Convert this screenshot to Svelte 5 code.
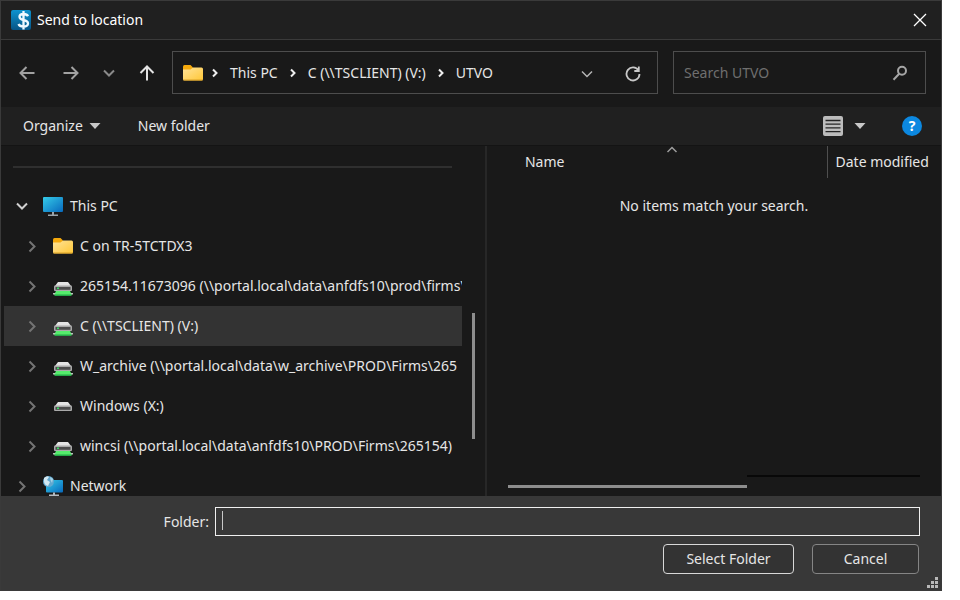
<script>
  const crumbs = ['This PC', 'C (\\\\TSCLIENT) (V:)', 'UTVO'];

  const tree = [
    { label: 'This PC', icon: 'pc', level: 0, open: true },
    { label: 'C on TR-5TCTDX3', icon: 'folder', level: 1 },
    { label: '265154.11673096 (\\\\portal.local\\data\\anfdfs10\\prod\\firms\\', icon: 'netdrive', level: 1 },
    { label: 'C (\\\\TSCLIENT) (V:)', icon: 'netdrive', level: 1, selected: true },
    { label: 'W_archive (\\\\portal.local\\data\\w_archive\\PROD\\Firms\\265', icon: 'netdrive', level: 1 },
    { label: 'Windows (X:)', icon: 'drive', level: 1 },
    { label: 'wincsi (\\\\portal.local\\data\\anfdfs10\\PROD\\Firms\\265154)', icon: 'netdrive', level: 1 },
    { label: 'Network', icon: 'network', level: 0 }
  ];

  let search = $state('');
  let folder = $state('');
</script>

{#snippet folderIcon()}
  <svg width="22" height="20" viewBox="0 0 22 20">
    <path d="M1 3.500Q1 2 2.500 2H8.500L11 4.500V8H1Z" fill="#f5a90c" />
    <path d="M1 6.500H8.500L11 4.500H19.500Q21 4.500 21 6V16Q21 17.500 19.500 17.500H2.500Q1 17.500 1 16Z" fill="url(#folderFill)" />
    <path d="M1.500 17H20.500" stroke="#d9a027" stroke-width="1" />
  </svg>
{/snippet}

{#snippet chevron(open)}
  <svg width="14" height="14" viewBox="0 0 14 14" fill="none" stroke-width="2">
    {#if open}
      <path d="M2 4.500L7 9.500L12 4.500" stroke="#d0d0d0" />
    {:else}
      <path d="M4.500 2.500L9.500 7.500L4.500 12.500" stroke="#747474" />
    {/if}
  </svg>
{/snippet}

{#snippet itemIcon(kind)}
  {#if kind === 'folder'}
    {@render folderIcon()}
  {:else if kind === 'pc'}
    <svg width="22" height="20" viewBox="0 0 22 20">
      <rect x="1" y="1" width="20" height="15" rx="1" fill="url(#screenFill)" />
      <path d="M10 16H12V18.500H16V20H6V18.500H10Z" fill="#9aa3aa" />
    </svg>
  {:else if kind === 'network'}
    <svg width="22" height="22" viewBox="0 0 22 22">
      <rect x="4" y="5" width="17" height="12.500" rx="1" fill="url(#screenFill)" />
      <path d="M11 17.500H13V19.500H17V21H7V19.500H11Z" fill="#b4bac0" />
      <circle cx="6.500" cy="6.500" r="5.500" fill="#62a8cf" />
      <path d="M2 3Q5 0 7 2L5 5L8 7L6 11Q2 10 2 6Z" fill="#d3e9f2" />
      <path d="M8 2L11 4L10 8L8.500 5Z" fill="#a8d2e6" />
    </svg>
  {:else}
    <svg width="22" height="20" viewBox="0 0 22 20">
      <path d="M6 6H16L19 10H3Z" fill="#e4e4e4" />
      <rect x="2" y="9.500" width="18" height="5.500" rx="1" fill="#a9a9a9" />
      <rect x="3.500" y="11" width="15" height="2.800" fill="#4c4c4c" />
      <rect x="5" y="11.500" width="2" height="1.500" fill="#39dd62" />
      {#if kind === 'netdrive'}
        <path d="M4 15H18L20 19H2Z" fill="#55ec6c" />
        <path d="M1 17H3.500L3 18.500H1ZM18.500 17H21V18.500H19Z" fill="#b8c4ba" />
        <path d="M2.500 18.500H19.500V20H2.500Z" fill="#25a947" />
      {/if}
    </svg>
  {/if}
{/snippet}

<svg class="defs" width="0" height="0" aria-hidden="true">
  <defs>
    <linearGradient id="folderFill" x1="0" y1="0" x2="1" y2="1">
      <stop offset="0" stop-color="#ffe39a" />
      <stop offset="1" stop-color="#ffc736" />
    </linearGradient>
    <linearGradient id="screenFill" x1="0" y1="0" x2="1" y2="1">
      <stop offset="0" stop-color="#35cbe8" />
      <stop offset="1" stop-color="#0869bd" />
    </linearGradient>
    <linearGradient id="appFill" x1="0" y1="0" x2="0" y2="1">
      <stop offset="0" stop-color="#0d93cf" />
      <stop offset="1" stop-color="#075485" />
    </linearGradient>
  </defs>
</svg>

<main class="dialog">
  <header class="titlebar">
    <svg width="20" height="20" viewBox="0 0 20 20">
      <rect width="20" height="20" rx="2" fill="url(#appFill)" />
      <path d="M12.500 1V19.500M17 6.200Q16 4 12.500 4Q8.500 4 8.500 6.800Q8.500 9.300 12.500 10Q17 10.800 17 13.500Q17 16.500 12.500 16.500Q8.500 16.500 7.500 14" fill="none" stroke="#eef8ff" stroke-width="2.300" />
    </svg>
    <h1>Send to location</h1>
    <button class="icon close" aria-label="Close">
      <svg width="14" height="14" viewBox="0 0 14 14" fill="none" stroke="#fff" stroke-width="1.300"><path d="M1 1L13 13M13 1L1 13" /></svg>
    </button>
  </header>

  <nav class="nav">
    <div class="history">
      <button class="icon" aria-label="Back">
        <svg width="18" height="18" viewBox="0 0 18 18" fill="none" stroke="#a2a2a2" stroke-width="2"><path d="M16.500 9H2.500M8.500 3L2.500 9L8.500 15" /></svg>
      </button>
      <button class="icon" aria-label="Forward">
        <svg width="18" height="18" viewBox="0 0 18 18" fill="none" stroke="#a2a2a2" stroke-width="2"><path d="M1.500 9H15.500M9.500 3L15.500 9L9.500 15" /></svg>
      </button>
      <button class="icon small" aria-label="Recent locations">
        <svg width="14" height="14" viewBox="0 0 14 14" fill="none" stroke="#8a8a8a" stroke-width="2"><path d="M2 4.500L7 9.500L12 4.500" /></svg>
      </button>
      <button class="icon" aria-label="Up">
        <svg width="18" height="18" viewBox="0 0 18 18" fill="none" stroke="#e4e4e4" stroke-width="2"><path d="M9 16.500V2.500M2.500 9L9 2.500L15.500 9" /></svg>
      </button>
    </div>
    <div class="address">
      {@render folderIcon()}
      {#each crumbs as crumb}
        <svg class="sep" width="8" height="12" viewBox="0 0 8 12" fill="none" stroke="#eee" stroke-width="2"><path d="M2 2.500L5.500 6L2 9.500" /></svg>
        <button class="crumb">{crumb}</button>
      {/each}
      <span class="grow"></span>
      <button class="icon" aria-label="Previous locations">
        <svg width="14" height="14" viewBox="0 0 14 14" fill="none" stroke="#b5b5b5" stroke-width="1.500"><path d="M2 5.500L7 10.500L12 5.500" /></svg>
      </button>
      <button class="icon refresh" aria-label="Refresh">
        <svg width="18" height="18" viewBox="0 0 18 18" fill="none" stroke="#c8c8c8" stroke-width="1.800"><path d="M14.500 6.500A6.500 6.500 0 1 0 15.500 10M14.800 2.500V7H10.300" /></svg>
      </button>
    </div>
    <label class="search">
      <input type="text" placeholder="Search UTVO" aria-label="Search UTVO" bind:value={search} />
      <svg width="16" height="16" viewBox="0 0 16 16" fill="none" stroke="#a6a6a6" stroke-width="2"><circle cx="10" cy="5.800" r="4" /><path d="M7.200 8.800L1.500 14.800" /></svg>
    </label>
  </nav>

  <div class="toolbar">
    <button>Organize <svg width="12" height="6" viewBox="0 0 12 6"><path d="M0.500 0H11.500L6 6Z" fill="#c8c8c8" /></svg></button>
    <button>New folder</button>
    <span class="grow"></span>
    <button class="view" aria-label="Change your view">
      <svg width="22" height="22" viewBox="0 0 22 22"><rect x="1" y="1" width="20" height="20" rx="2" fill="#bcbcbc" /><path d="M3.500 5.500H18.500M3.500 9.200H18.500M3.500 12.900H18.500M3.500 16.600H18.500" stroke="#242424" stroke-width="1.300" /></svg>
      <svg width="12" height="6" viewBox="0 0 12 6"><path d="M0.500 0H11.500L6 6Z" fill="#c8c8c8" /></svg>
    </button>
    <button class="help" aria-label="Help">?</button>
  </div>

  <div class="body">
    <aside>
      <div class="tree">
        <hr />
        <ul>
          {#each tree as item}
            <li class:child={item.level === 1} class:selected={item.selected}>
              <button class="icon toggle" aria-label={item.open ? 'Collapse' : 'Expand'}>{@render chevron(item.open)}</button>
              <button class="node">
                {@render itemIcon(item.icon)}
                <span>{item.label}</span>
              </button>
            </li>
          {/each}
        </ul>
      </div>
      <div class="vscroll"><div></div></div>
    </aside>
    <section class="files">
      <table>
        <thead>
          <tr>
            <th class="name">
              <svg width="12" height="7" viewBox="0 0 12 7" fill="none" stroke="#9c9c9c" stroke-width="1.500"><path d="M1.500 6L6 1.500L10.500 6" /></svg>
              Name
            </th>
            <th class="date">Date modified</th>
          </tr>
        </thead>
        <tbody>
          <tr><td colspan="2">No items match your search.</td></tr>
        </tbody>
      </table>
      <div class="hscroll"><div class="thumb"></div><div class="rest"></div></div>
    </section>
  </div>

  <footer>
    <div class="field">
      <label for="folder">Folder:</label>
      <div class="entry">
        <input id="folder" type="text" bind:value={folder} />
        <i class="caret"></i>
      </div>
    </div>
    <div class="actions">
      <button class="primary">Select Folder</button>
      <button>Cancel</button>
    </div>
    <svg class="grip" width="12" height="12" viewBox="0 0 12 12" fill="#b8b8b8"><path d="M8 0H11V3H8ZM8 4H11V7H8ZM4 4H7V7H4ZM8 8H11V11H8ZM4 8H7V11H4ZM0 8H3V11H0Z" /></svg>
  </footer>
</main>

<style>
  :global(body) {
    margin: 0;
    background: #fff;
  }
  .defs {
    position: absolute;
  }
  .dialog,
  .dialog * {
    box-sizing: border-box;
  }
  .dialog {
    display: flex;
    flex-direction: column;
    height: calc(100vh - 9px);
    margin-right: 18px;
    border: 1px solid #3a3a3a;
    background: #191919;
    color: #e6e6e6;
    font: 14px/20px "Noto Sans", "Open Sans", sans-serif;
    overflow: hidden;
  }
  svg {
    flex: none;
    display: block;
  }
  button,
  input {
    margin: 0;
    padding: 0;
    border: 0;
    background: none;
    color: inherit;
    font: inherit;
    outline: none;
  }
  .icon {
    display: flex;
    flex: none;
    align-items: center;
    justify-content: center;
  }
  .grow {
    flex: 1;
  }
  .titlebar {
    display: flex;
    flex: none;
    align-items: center;
    gap: 6px;
    height: 39px;
    padding: 0 14px 0 10px;
    border-bottom: 1px solid #3a3a3a;
    background: #202020;
    color: #fff;
  }
  h1 {
    flex: 1;
    margin: 0;
    font-size: 14px;
    font-weight: 400;
  }
  .nav {
    display: flex;
    flex: none;
    align-items: center;
    height: 67px;
    padding: 0 15px 2px 17px;
  }
  .history {
    display: flex;
    flex: none;
    align-items: center;
    gap: 22px;
    width: 154px;
  }
  .history .icon {
    width: 18px;
    height: 32px;
  }
  .history .icon + .icon {
    margin-left: 4px;
  }
  .history .small + .icon,
  .history .icon + .small {
    width: 18px;
    margin-left: -2px;
  }
  .address,
  .search {
    display: flex;
    align-items: center;
    height: 43px;
    border: 1px solid #4d4d4d;
  }
  .address {
    flex: 1;
    min-width: 0;
    padding: 0 15px 0 9px;
  }
  .sep {
    margin: 0 11px 0 7px;
  }
  .crumb {
    white-space: nowrap;
  }
  .crumb + .sep {
    margin-left: 11px;
  }
  .refresh {
    margin-left: 30px;
  }
  .search {
    flex: 0 1 253px;
    min-width: 0;
    margin-left: 15px;
    padding: 0 17px 0 10px;
  }
  .search input {
    flex: 1;
    min-width: 0;
  }
  .search input::placeholder {
    color: #6f6f6f;
    opacity: 1;
  }
  .toolbar {
    display: flex;
    flex: none;
    align-items: center;
    height: 39px;
    padding: 0 19px 0 22px;
    background: #202020;
    border-bottom: 1px solid #141414;
  }
  .toolbar button {
    display: flex;
    align-items: center;
    gap: 6px;
    margin-right: 37px;
  }
  .toolbar .view {
    gap: 10px;
    margin-right: 36px;
  }
  .toolbar .help {
    justify-content: center;
    width: 20px;
    height: 20px;
    margin: 0;
    border-radius: 50%;
    background: #0c88e0;
    color: #fff;
    font-weight: 700;
  }
  .body {
    display: flex;
    flex: 1;
    min-height: 0;
  }
  aside {
    display: flex;
    flex: 485;
    min-width: 0;
    border-right: 2px solid #272727;
  }
  .tree {
    flex: 1;
    min-width: 0;
    padding-left: 3px;
    overflow: hidden;
  }
  hr {
    height: 2px;
    margin: 20px 10px 18px 9px;
    border: 0;
    background: #2f2f2f;
  }
  ul {
    margin: 0;
    padding: 0;
    list-style: none;
  }
  li {
    display: flex;
    align-items: center;
    height: 40px;
    padding-left: 11px;
  }
  .child {
    padding-left: 21px;
  }
  .selected {
    background: #333;
  }
  .toggle {
    width: 14px;
    height: 20px;
  }
  .node {
    display: flex;
    flex: 1;
    align-items: center;
    gap: 6px;
    min-width: 0;
    margin-left: 13px;
    overflow: hidden;
    white-space: nowrap;
  }
  .vscroll {
    width: 23px;
    padding: 167px 0 0 10px;
  }
  .vscroll div {
    width: 3px;
    height: 126px;
    background: #8d8d8d;
  }
  .files {
    display: flex;
    flex: 455;
    flex-direction: column;
    justify-content: space-between;
    min-width: 0;
  }
  table {
    width: 100%;
    border-collapse: collapse;
    table-layout: fixed;
  }
  th {
    position: relative;
    height: 32px;
    padding: 0;
    font-weight: 400;
    text-align: left;
    white-space: nowrap;
  }
  .name {
    padding-left: 38px;
  }
  .name svg {
    position: absolute;
    top: 0;
    left: 179px;
  }
  .date {
    width: 114px;
    padding-left: 8px;
    border-left: 1px solid #4f4f4f;
  }
  td {
    height: 56px;
    padding: 0;
    text-align: center;
  }
  .hscroll {
    display: flex;
    align-items: flex-end;
    height: 13px;
    margin: 0 21px 8px 21px;
  }
  .thumb {
    flex: 238;
    height: 3px;
    background: #8d8d8d;
  }
  .rest {
    flex: 173;
    align-self: flex-start;
    height: 13px;
    border-top: 2px solid #080808;
  }
  footer {
    position: relative;
    flex: none;
    height: 94px;
    padding: 11px 21px 0 10px;
    background: #383838;
  }
  .field {
    display: flex;
    align-items: center;
    gap: 6px;
  }
  .field label {
    width: 198px;
    text-align: right;
  }
  .entry {
    position: relative;
    display: flex;
    flex: 1;
  }
  .entry input {
    width: 100%;
    height: 29px;
    padding: 0 8px;
    border: 1px solid #f0f0f0;
  }
  .caret {
    position: absolute;
    top: 4px;
    left: 7px;
    width: 1px;
    height: 19px;
    background: #c8c8c8;
  }
  .actions {
    display: flex;
    justify-content: flex-end;
    gap: 18px;
    margin: 8px 1px 0 0;
  }
  .actions button {
    width: 107px;
    height: 30px;
    border: 1px solid #858585;
    border-radius: 4px;
    background: #333;
  }
  .actions .primary {
    width: 131px;
    border-color: #d8d8d8;
  }
  .grip {
    position: absolute;
    right: 2px;
    bottom: 1px;
  }
</style>
